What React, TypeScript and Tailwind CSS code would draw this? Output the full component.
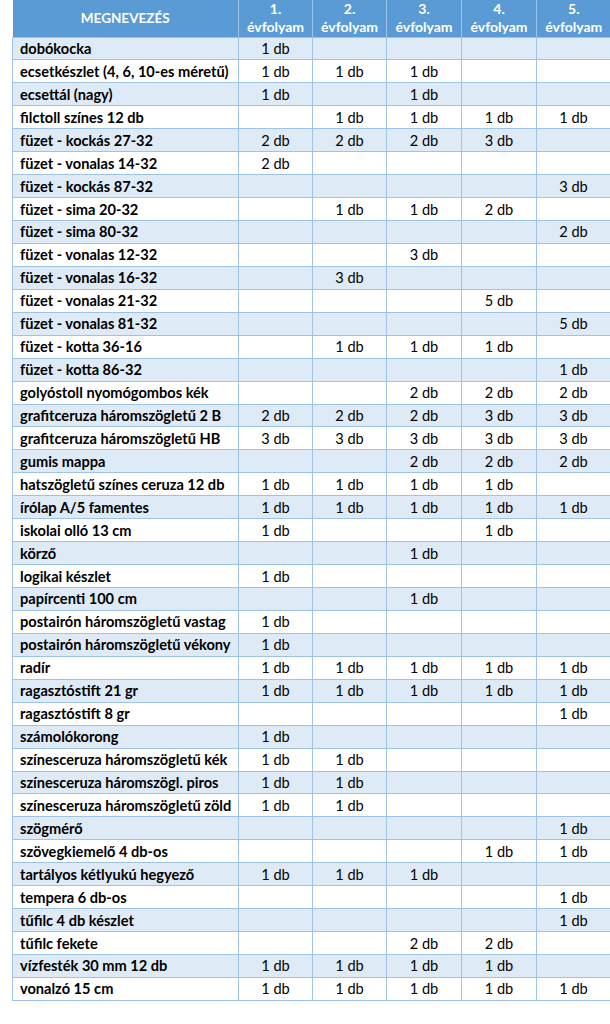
import React from 'react';

type Row = [string, string, string, string, string, string];

const rows: Row[] = [
  ['dobókocka', '1 db', '', '', '', ''],
  ['ecsetkészlet (4, 6, 10-es méretű)', '1 db', '1 db', '1 db', '', ''],
  ['ecsettál (nagy)', '1 db', '', '1 db', '', ''],
  ['filctoll színes 12 db', '', '1 db', '1 db', '1 db', '1 db'],
  ['füzet - kockás 27-32', '2 db', '2 db', '2 db', '3 db', ''],
  ['füzet - vonalas 14-32', '2 db', '', '', '', ''],
  ['füzet - kockás 87-32', '', '', '', '', '3 db'],
  ['füzet - sima 20-32', '', '1 db', '1 db', '2 db', ''],
  ['füzet - sima 80-32', '', '', '', '', '2 db'],
  ['füzet - vonalas 12-32', '', '', '3 db', '', ''],
  ['füzet - vonalas 16-32', '', '3 db', '', '', ''],
  ['füzet - vonalas 21-32', '', '', '', '5 db', ''],
  ['füzet - vonalas 81-32', '', '', '', '', '5 db'],
  ['füzet - kotta 36-16', '', '1 db', '1 db', '1 db', ''],
  ['füzet - kotta 86-32', '', '', '', '', '1 db'],
  ['golyóstoll nyomógombos kék', '', '', '2 db', '2 db', '2 db'],
  ['grafitceruza háromszögletű 2 B', '2 db', '2 db', '2 db', '3 db', '3 db'],
  ['grafitceruza háromszögletű HB', '3 db', '3 db', '3 db', '3 db', '3 db'],
  ['gumis mappa', '', '', '2 db', '2 db', '2 db'],
  ['hatszögletű színes ceruza 12 db', '1 db', '1 db', '1 db', '1 db', ''],
  ['írólap A/5 famentes', '1 db', '1 db', '1 db', '1 db', '1 db'],
  ['iskolai olló 13 cm', '1 db', '', '', '1 db', ''],
  ['körző', '', '', '1 db', '', ''],
  ['logikai készlet', '1 db', '', '', '', ''],
  ['papírcenti 100 cm', '', '', '1 db', '', ''],
  ['postairón háromszögletű vastag', '1 db', '', '', '', ''],
  ['postairón háromszögletű vékony', '1 db', '', '', '', ''],
  ['radír', '1 db', '1 db', '1 db', '1 db', '1 db'],
  ['ragasztóstift 21 gr', '1 db', '1 db', '1 db', '1 db', '1 db'],
  ['ragasztóstift 8 gr', '', '', '', '', '1 db'],
  ['számolókorong', '1 db', '', '', '', ''],
  ['színesceruza háromszögletű kék', '1 db', '1 db', '', '', ''],
  ['színesceruza háromszögl. piros', '1 db', '1 db', '', '', ''],
  ['színesceruza háromszögletű zöld', '1 db', '1 db', '', '', ''],
  ['szögmérő', '', '', '', '', '1 db'],
  ['szövegkiemelő 4 db-os', '', '', '', '1 db', '1 db'],
  ['tartályos kétlyukú hegyező', '1 db', '1 db', '1 db', '', ''],
  ['tempera 6 db-os', '', '', '', '', '1 db'],
  ['tűfilc 4 db készlet', '', '', '', '', '1 db'],
  ['tűfilc fekete', '', '', '2 db', '2 db', ''],
  ['vízfesték 30 mm 12 db', '1 db', '1 db', '1 db', '1 db', ''],
  ['vonalzó 15 cm', '1 db', '1 db', '1 db', '1 db', '1 db'],
];

const grades = ['1.', '2.', '3.', '4.', '5.'];

export default function App() {
  return (
    <div className="min-h-screen bg-white pl-[12px] font-['Lato','Open_Sans',sans-serif] text-[14.6px] text-black">
      <table className="w-[598px] table-fixed border-collapse">
        <colgroup>
          <col className="w-[226px]" />
          <col className="w-[74px]" />
          <col className="w-[74px]" />
          <col className="w-[75px]" />
          <col className="w-[75px]" />
          <col className="w-[74px]" />
        </colgroup>
        <thead>
          <tr className="h-[37px] bg-[#5b9bd5] text-white">
            <th className="border-r border-[#9dc3e6] text-center text-[13.5px] font-bold">MEGNEVEZÉS</th>
            {grades.map((g) => (
              <th key={g} className="border-r border-[#9dc3e6] text-center text-[14px] font-bold leading-[18px] last:border-r-0">
                {g}
                <br />
                évfolyam
              </th>
            ))}
          </tr>
        </thead>
        <tbody>
          {rows.map((row, i) => (
            <tr key={row[0]} className={`h-[22.95px] ${i % 2 === 0 ? 'bg-[#deeaf6]' : 'bg-white'}`}>
              <td className="overflow-hidden whitespace-nowrap border border-[#9dc3e6] pl-[7px] font-bold leading-[21px]">{row[0]}</td>
              {row.slice(1).map((v, j) => (
                <td key={j} className="border border-[#9dc3e6] text-center leading-[21px]">
                  {v}
                </td>
              ))}
            </tr>
          ))}
        </tbody>
      </table>
    </div>
  );
}
